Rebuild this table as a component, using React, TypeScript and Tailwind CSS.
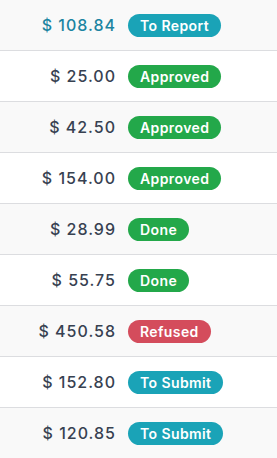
import React from "react";

type Row = { amount: string; status: string; kind: "info" | "success" | "danger"; highlight?: boolean };

const rows: Row[] = [
  { amount: "$ 108.84", status: "To Report", kind: "info", highlight: true },
  { amount: "$ 25.00", status: "Approved", kind: "success" },
  { amount: "$ 42.50", status: "Approved", kind: "success" },
  { amount: "$ 154.00", status: "Approved", kind: "success" },
  { amount: "$ 28.99", status: "Done", kind: "success" },
  { amount: "$ 55.75", status: "Done", kind: "success" },
  { amount: "$ 450.58", status: "Refused", kind: "danger" },
  { amount: "$ 152.80", status: "To Submit", kind: "info" },
  { amount: "$ 120.85", status: "To Submit", kind: "info" },
];

const badgeBg: Record<Row["kind"], string> = {
  info: "bg-[#1aa3b7]",
  success: "bg-[#23a84a]",
  danger: "bg-[#d44c5c]",
};

export default function App() {
  return (
    <div
      className="w-[277px] h-[458px] overflow-hidden bg-white"
      style={{ fontFamily: "Inter, 'Noto Sans', sans-serif" }}
    >
      {rows.map((r, i) => (
        <div
          key={i}
          className={`flex items-center h-[51px] border-b border-[#dcdde0] ${i % 2 === 0 ? "bg-[#f9f9f9]" : "bg-white"}`}
        >
          <div
            className={`w-[116px] text-right text-[16px] font-medium tracking-[1px] ${r.highlight ? "text-[#1b84a1]" : "text-[#374151]"}`}
          >
            {r.amount}
          </div>
          <div className="ml-[12px]">
            <span
              className={`inline-flex items-center h-[23px] pl-[12px] pr-[12px] rounded-full text-white text-[14px] font-semibold tracking-[0.4px] ${badgeBg[r.kind]}`}
            >
              {r.status}
            </span>
          </div>
        </div>
      ))}
    </div>
  );
}
